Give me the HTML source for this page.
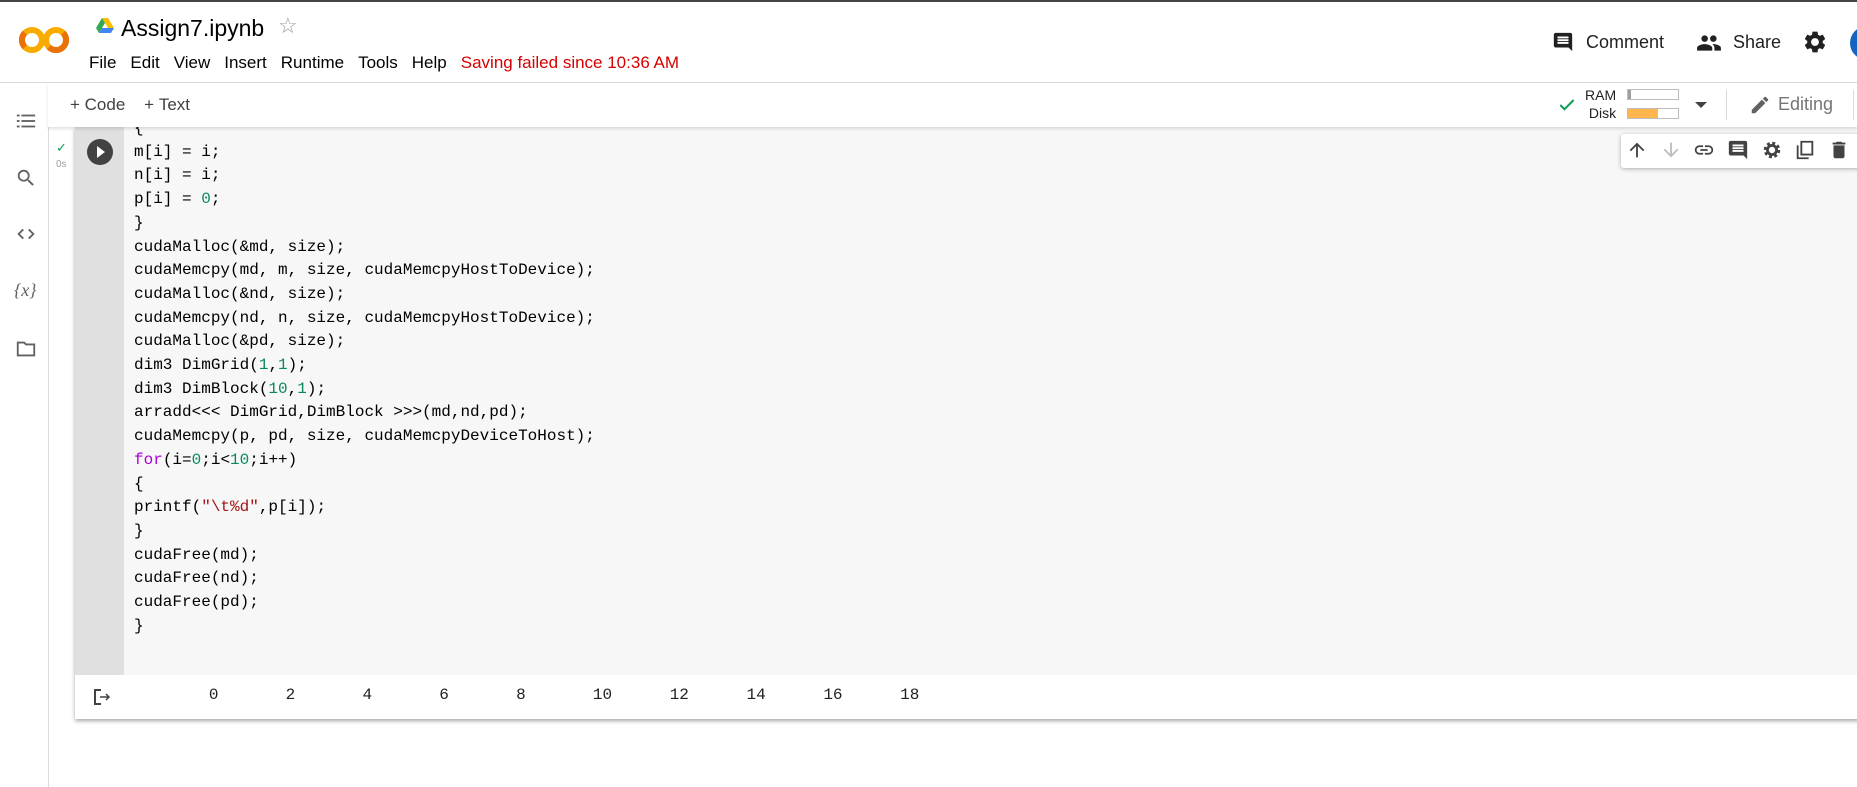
<!DOCTYPE html>
<html><head><meta charset="utf-8"><style>
*{margin:0;padding:0;box-sizing:border-box}
body{width:1857px;height:787px;overflow:hidden;background:#fff;font-family:"Liberation Sans",sans-serif;position:relative;color:#212121}
.a{position:absolute}
.t{z-index:6}
.code{font-family:"Liberation Mono",monospace;font-size:16px;line-height:23.7px;color:#000;white-space:pre}
.n{color:#09885a}.s{color:#a31515}.k{color:#af00db}
.menu span{margin-right:14px}
</style></head><body>
<div class="a" style="left:0;top:0;width:1857px;height:2px;background:#444"></div>
<svg class="a" style="left:18px;top:24px" width="56" height="32" viewBox="0 0 56 32">
<circle cx="14" cy="16" r="10" fill="none" stroke="#f9ab00" stroke-width="6"/>
<path d="M6.9 23.1A10 10 0 0 1 6.9 8.9" fill="none" stroke="#e8710a" stroke-width="6"/>
<circle cx="38" cy="16" r="10" fill="none" stroke="#f9ab00" stroke-width="6"/>
<path d="M45.1 8.9A10 10 0 0 1 45.1 23.1A10 10 0 0 1 30.9 23.1" fill="none" stroke="#e8710a" stroke-width="6"/>
</svg>
<svg class="a" style="left:96px;top:18px" width="18" height="16" viewBox="0 0 18 16"><path d="M6 0h6l6 10h-6z" fill="#fbbc04"/><path d="M6 0L0 10l3 5 6-10z" fill="#34a853"/><path d="M3 15h12l3-5H6z" fill="#4285f4"/></svg>
<div class="a" style="left:121px;top:15px;font-size:23px;color:#000">Assign7.ipynb</div>
<div class="a" style="left:278px;top:13px;font-size:22px;color:#9e9e9e">☆</div>
<div class="a menu" style="left:89px;top:53px;font-size:17px;color:#000"><span>File</span><span>Edit</span><span>View</span><span>Insert</span><span>Runtime</span><span>Tools</span><span>Help</span><span style="color:#d50000">Saving failed since 10:36 AM</span></div>
<svg class="a" style="left:1552px;top:31px" width="22" height="22" viewBox="0 0 24 24"><path d="M21.99 4c0-1.1-.89-2-1.99-2H4c-1.1 0-2 .9-2 2v12c0 1.1.9 2 2 2h14l4 4-.01-18zM18 14H6v-2h12v2zm0-3H6V9h12v2zm0-3H6V6h12v2z" fill="#212121"/></svg>
<div class="a" style="left:1586px;top:32px;font-size:18px">Comment</div>
<svg class="a" style="left:1696px;top:30px" width="26" height="26" viewBox="0 0 24 24"><path d="M16 11c1.66 0 2.99-1.34 2.99-3S17.66 5 16 5c-1.66 0-3 1.34-3 3s1.34 3 3 3zm-8 0c1.66 0 2.99-1.34 2.99-3S9.66 5 8 5C6.34 5 5 6.34 5 8s1.34 3 3 3zm0 2c-2.33 0-7 1.17-7 3.5V19h14v-2.5c0-2.33-4.67-3.5-7-3.5zm8 0c-.29 0-.62.02-.97.05 1.16.84 1.97 1.97 1.97 3.45V19h6v-2.5c0-2.33-4.67-3.5-7-3.5z" fill="#212121"/></svg>
<div class="a" style="left:1733px;top:32px;font-size:18px">Share</div>
<svg class="a" style="left:1802px;top:29px" width="26" height="26" viewBox="0 0 24 24"><path d="M19.14 12.94c.04-.3.06-.61.06-.94 0-.32-.02-.64-.07-.94l2.03-1.58a.49.49 0 0 0 .12-.61l-1.92-3.32a.488.488 0 0 0-.59-.22l-2.39.96c-.5-.38-1.03-.7-1.62-.94l-.36-2.54a.484.484 0 0 0-.48-.41h-3.84c-.24 0-.43.17-.47.41l-.36 2.54c-.59.24-1.13.57-1.62.94l-2.39-.96c-.22-.08-.47 0-.59.22L2.74 8.87c-.12.21-.08.47.12.61l2.03 1.58c-.05.3-.09.63-.09.94s.02.64.07.94l-2.03 1.58a.49.49 0 0 0-.12.61l1.92 3.32c.12.22.37.29.59.22l2.39-.96c.5.38 1.03.7 1.62.94l.36 2.54c.05.24.24.41.48.41h3.84c.24 0 .44-.17.47-.41l.36-2.54c.59-.24 1.13-.56 1.62-.94l2.39.96c.22.08.47 0 .59-.22l1.92-3.32c.12-.22.07-.47-.12-.61l-2.01-1.58zM12 15.6c-1.98 0-3.6-1.62-3.6-3.6s1.62-3.6 3.6-3.6 3.6 1.62 3.6 3.6-1.62 3.6-3.6 3.6z" fill="#212121"/></svg>
<div class="a" style="left:1850px;top:26px;width:34px;height:34px;border-radius:50%;background:#1565c0"></div>
<div class="a" style="left:0;top:82px;width:1857px;height:1px;background:#dadada"></div>
<div class="a" style="left:48px;top:83px;width:1px;height:704px;background:#dadada"></div>
<svg class="a" style="left:15px;top:110px" width="22" height="22" viewBox="0 0 24 24" fill="#616161"><rect x="2" y="5" width="3" height="2"/><rect x="7" y="5" width="15" height="2"/><rect x="2" y="11" width="3" height="2"/><rect x="7" y="11" width="15" height="2"/><rect x="2" y="17" width="3" height="2"/><rect x="7" y="17" width="15" height="2"/></svg>
<svg class="a" style="left:15px;top:167px" width="22" height="22" viewBox="0 0 24 24"><path d="M15.5 14h-.79l-.28-.27A6.47 6.47 0 0 0 16 9.5 6.5 6.5 0 1 0 9.5 16c1.61 0 3.09-.59 4.23-1.57l.27.28v.79l5 4.99L20.49 19l-4.99-5zm-6 0C7.01 14 5 11.99 5 9.5S7.01 5 9.5 5 14 7.01 14 9.5 11.99 14 9.5 14z" fill="#616161"/></svg>
<svg class="a" style="left:15px;top:223px" width="22" height="22" viewBox="0 0 24 24" fill="none" stroke="#616161" stroke-width="2"><path d="M9 7l-5 5 5 5M15 7l5 5-5 5"/></svg>
<div class="a" style="left:14px;top:280px;font-family:'Liberation Serif',serif;font-size:18px;color:#616161;font-style:italic">{x}</div>
<svg class="a" style="left:15px;top:338px" width="22" height="22" viewBox="0 0 24 24"><path d="M3 5h7l2 2h9v12H3z" fill="none" stroke="#616161" stroke-width="2"/></svg>
<div class="a" style="left:48px;top:83px;width:1809px;height:44px;background:#fff;box-shadow:0 2px 3px rgba(0,0,0,.12);z-index:5"></div>
<div class="a t" style="left:70px;top:95px;font-size:17px;color:#424242">+&nbsp;Code&nbsp;&nbsp;&nbsp;&nbsp;+&nbsp;Text</div>
<svg class="a t" style="left:1556px;top:95px" width="22" height="20" viewBox="0 0 24 24"><path d="M4 12l5 5L20 6" fill="none" stroke="#0f9d58" stroke-width="2.4"/></svg>
<div class="a t" style="left:1585px;top:86px;font-size:14px;line-height:18px;color:#212121;text-align:right">RAM<br>Disk</div>
<div class="a t" style="left:1627px;top:89px;width:52px;height:11px;border:1px solid #bdbdbd"><div style="width:3px;height:9px;background:#9e9e9e"></div></div>
<div class="a t" style="left:1627px;top:108px;width:52px;height:11px;border:1px solid #bdbdbd"><div style="width:30px;height:9px;background:#ffb74d"></div></div>
<div class="a t" style="left:1695px;top:102px;width:0;height:0;border-left:6px solid transparent;border-right:6px solid transparent;border-top:6px solid #424242"></div>
<div class="a t" style="left:1726px;top:90px;width:1px;height:30px;background:#dadada"></div>
<svg class="a t" style="left:1749px;top:94px" width="22" height="22" viewBox="0 0 24 24"><path d="M3 17.25V21h3.75L17.81 9.94l-3.75-3.75L3 17.25zM20.71 7.04a1 1 0 0 0 0-1.41l-2.34-2.34a1 1 0 0 0-1.41 0l-1.83 1.83 3.75 3.75 1.83-1.83z" fill="#616161"/></svg>
<div class="a t" style="left:1778px;top:94px;font-size:18px;color:#757575">Editing</div>
<div class="a t" style="left:1853px;top:90px;width:1px;height:30px;background:#dadada"></div>
<div class="a" style="left:75px;top:127px;width:1800px;height:592px;box-shadow:0 2px 4px rgba(0,0,0,.35);background:#fff"></div>
<div class="a" style="left:75px;top:127px;width:1800px;height:548px;background:#f7f7f7"></div>
<div class="a" style="left:75px;top:127px;width:49px;height:548px;background:#e0e0e0"></div>
<div class="a" style="left:56px;top:140px;font-size:13px;color:#0f9d58">✓</div>
<div class="a" style="left:56px;top:159px;font-size:10px;color:#9e9e9e">0s</div>
<div class="a" style="left:87px;top:139px;width:26px;height:26px;border-radius:50%;background:#424242"></div>
<div class="a" style="left:97px;top:146px;width:0;height:0;border-top:6px solid transparent;border-bottom:6px solid transparent;border-left:8px solid #fff"></div>
<div class="a" style="left:0;top:127px;width:1857px;height:560px;overflow:hidden;pointer-events:none">
<div class="a code" style="left:134px;top:-10px">{
m[i] = i;
n[i] = i;
p[i] = <span class="n">0</span>;
}
cudaMalloc(&amp;md, size);
cudaMemcpy(md, m, size, cudaMemcpyHostToDevice);
cudaMalloc(&amp;nd, size);
cudaMemcpy(nd, n, size, cudaMemcpyHostToDevice);
cudaMalloc(&amp;pd, size);
dim3 DimGrid(<span class="n">1</span>,<span class="n">1</span>);
dim3 DimBlock(<span class="n">10</span>,<span class="n">1</span>);
arradd&lt;&lt;&lt; DimGrid,DimBlock &gt;&gt;&gt;(md,nd,pd);
cudaMemcpy(p, pd, size, cudaMemcpyDeviceToHost);
<span class="k">for</span>(i=<span class="n">0</span>;i&lt;<span class="n">10</span>;i++)
{
printf(<span class="s">"\t%d"</span>,p[i]);
}
cudaFree(md);
cudaFree(nd);
cudaFree(pd);
}</div></div>
<div class="a" style="left:1621px;top:134px;width:240px;height:34px;background:#fff;border-radius:3px;box-shadow:0 1px 4px rgba(0,0,0,.3)"></div>
<svg class="a" style="left:1626px;top:139px" width="22" height="22" viewBox="0 0 24 24"><path d="M4 12l1.41 1.41L11 7.83V20h2V7.83l5.58 5.59L20 12l-8-8z" fill="#424242"/></svg>
<svg class="a" style="left:1660px;top:139px" width="22" height="22" viewBox="0 0 24 24"><path d="M20 12l-1.41-1.41L13 16.17V4h-2v12.17l-5.58-5.59L4 12l8 8z" fill="#bdbdbd"/></svg>
<svg class="a" style="left:1693px;top:139px" width="22" height="22" viewBox="0 0 24 24"><path d="M3.9 12c0-1.71 1.39-3.1 3.1-3.1h4V7H7c-2.76 0-5 2.24-5 5s2.24 5 5 5h4v-1.9H7c-1.71 0-3.1-1.39-3.1-3.1zM8 13h8v-2H8v2zm9-6h-4v1.9h4c1.71 0 3.1 1.39 3.1 3.1s-1.39 3.1-3.1 3.1h-4V17h4c2.76 0 5-2.24 5-5s-2.24-5-5-5z" fill="#424242"/></svg>
<svg class="a" style="left:1727px;top:139px" width="22" height="22" viewBox="0 0 24 24"><path d="M21.99 4c0-1.1-.89-2-1.99-2H4c-1.1 0-2 .9-2 2v12c0 1.1.9 2 2 2h14l4 4-.01-18zM18 14H6v-2h12v2zm0-3H6V9h12v2zm0-3H6V6h12v2z" fill="#424242"/></svg>
<svg class="a" style="left:1761px;top:139px" width="22" height="22" viewBox="0 0 24 24"><circle cx="12" cy="12" r="7" fill="none" stroke="#424242" stroke-width="4" stroke-dasharray="3 2.5"/><circle cx="12" cy="12" r="5" fill="none" stroke="#424242" stroke-width="3"/></svg>
<svg class="a" style="left:1794px;top:139px" width="22" height="22" viewBox="0 0 24 24" fill="none" stroke="#424242" stroke-width="2"><path d="M8 3h12v14H8z"/><path d="M4 7v14h12"/></svg>
<svg class="a" style="left:1828px;top:139px" width="22" height="22" viewBox="0 0 24 24"><path d="M6 19c0 1.1.9 2 2 2h8c1.1 0 2-.9 2-2V7H6v12zM19 4h-3.5l-1-1h-5l-1 1H5v2h14V4z" fill="#424242"/></svg>
<svg class="a" style="left:92px;top:687px" width="20" height="20" viewBox="0 0 20 20" fill="none" stroke="#424242" stroke-width="2"><path d="M9 3H3v14h6"/><path d="M8 10h9M14 7l3 3-3 3" stroke-width="1.5"/></svg>
<div class="a code" style="left:132px;top:684px;color:#212121">	0	2	4	6	8	10	12	14	16	18</div>
</body></html>
